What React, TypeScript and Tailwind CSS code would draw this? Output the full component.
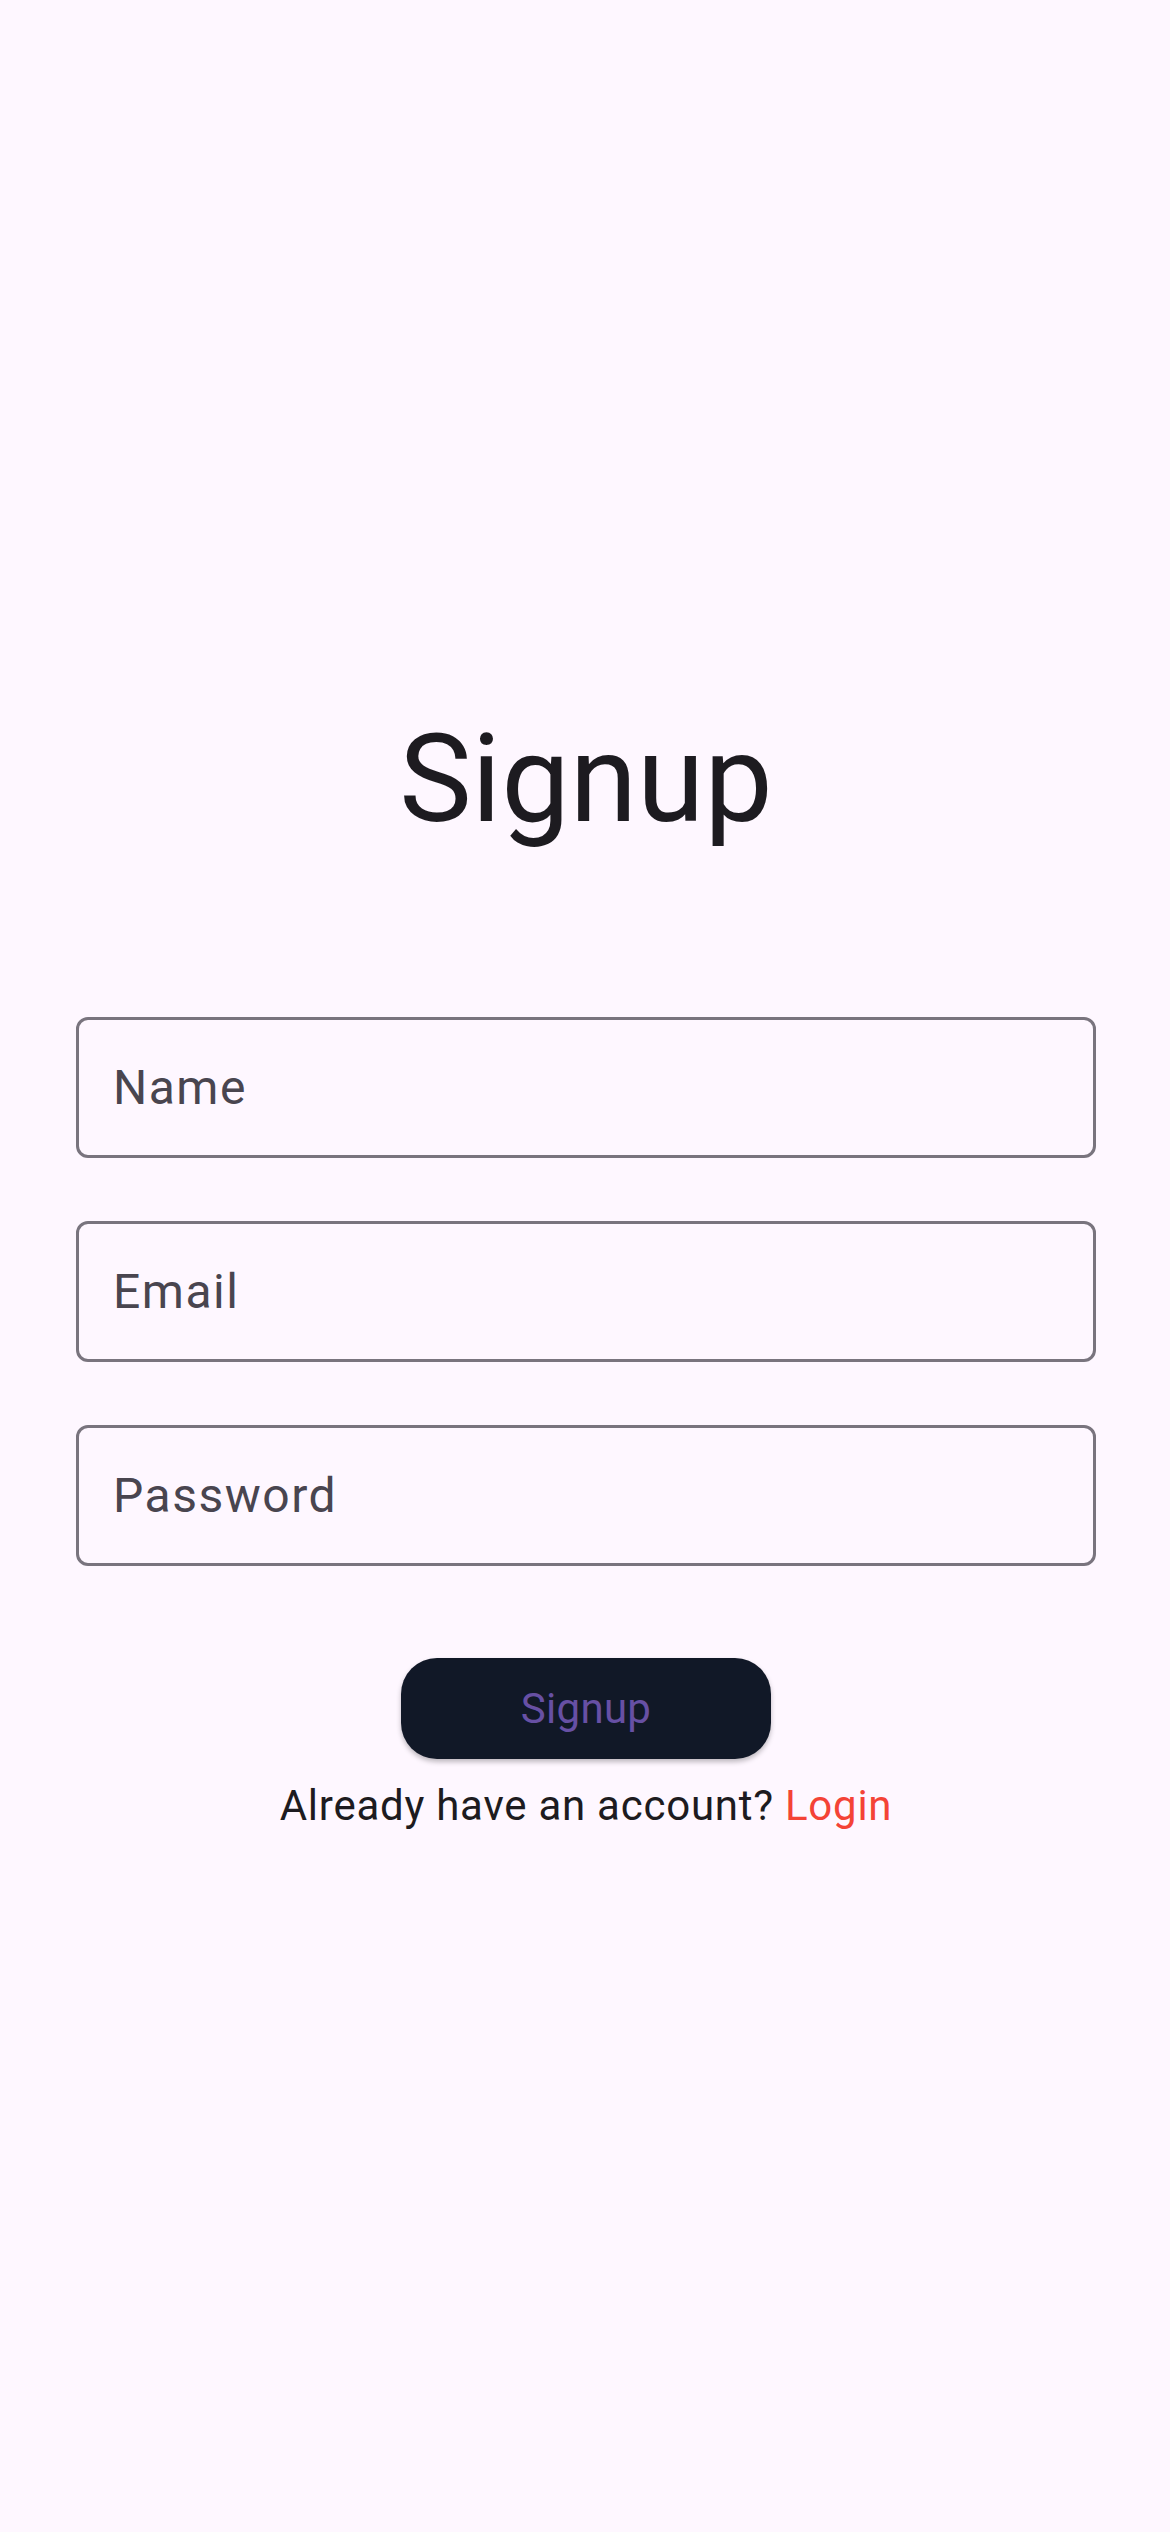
export default function App() {
  const fields = ["Name", "Email", "Password"];

  return (
    <div
      className="w-full min-h-[2532px] bg-[#fef7ff] flex flex-col items-center pl-[76px] pr-[74px] pt-[706px]"
      style={{ fontFamily: "Roboto, 'Noto Sans', sans-serif" }}
    >
      {/* Title */}
      <h1 className="text-[122px] leading-[148px] font-normal text-[#1d1b20]">
        Signup
      </h1>

      {/* Fields */}
      <div className="w-full flex flex-col gap-[63px] mt-[163px]">
        {fields.map((label) => (
          <input
            key={label}
            type={label === "Password" ? "password" : "text"}
            placeholder={label}
            className="w-full h-[141px] border-[3px] border-[#79747e] rounded-[12px] bg-transparent px-[34px] text-[48px] tracking-[1.5px] text-[#1d1b20] placeholder:text-[#49454f] outline-none"
          />
        ))}
      </div>

      {/* Button */}
      <button className="mt-[92px] w-[370px] h-[101px] rounded-[36px] bg-[#111827] text-[#6750a4] text-[42px] tracking-[0.3px] shadow-[0_3px_5px_rgba(0,0,0,0.25)]">
        Signup
      </button>

      <p className="mt-[19px] text-[42px] leading-[56px] tracking-[0.75px] text-[#1d1b20]">
        Already have an account? <span className="text-[#f44336]">Login</span>
      </p>
    </div>
  );
}
